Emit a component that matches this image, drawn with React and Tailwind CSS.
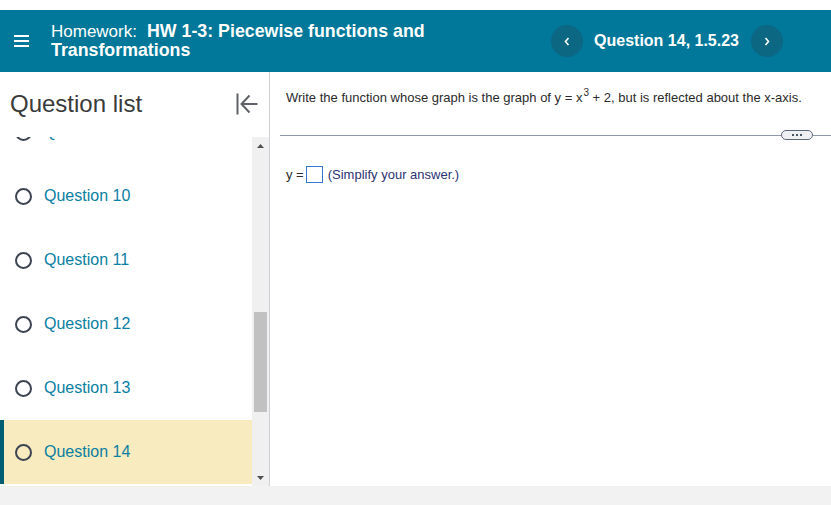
const questions = [
  { n: 9 },
  { n: 10 },
  { n: 11 },
  { n: 12 },
  { n: 13 },
  { n: 14, active: true },
];

const QuestionRow = ({ n, active }) => (
  <div
    className={
      active
        ? 'h-[64px] flex items-center pl-[11px] border-l-4 border-[#005d72] bg-[#f8ebbf]'
        : 'h-[64px] flex items-center pl-[15px]'
    }
  >
    <div className="w-[17px] h-[17px] rounded-full border-2 border-[#3c4452] shrink-0" />
    <span className="ml-[12px] text-[16px] text-[#0b7ea3]">Question {n}</span>
  </div>
);

const App = () => {
  return (
    <div
      className="w-[831px] h-[505px] bg-[#f2f2f2] flex flex-col overflow-hidden"
      style={{ fontFamily: '"Liberation Sans", Arial, sans-serif' }}
    >
      <div className="h-[10px] bg-white" />

      {/* header */}
      <div className="h-[62px] bg-[#017899] flex items-center text-white">
        <div className="ml-[14px] w-[15px] flex flex-col gap-[3px]">
          <div className="h-[2px] bg-white" />
          <div className="h-[2px] bg-white" />
          <div className="h-[2px] bg-white" />
        </div>
        <div className="ml-[22px] text-[17.8px] leading-[18px] -mt-[2px]">
          <div>
            <span className="text-[17px]">Homework:</span>
            <span className="ml-[10px] font-bold">HW 1-3: Piecewise functions and</span>
          </div>
          <div className="font-bold">Transformations</div>
        </div>
        <div className="ml-auto mr-[48px] flex items-center">
          <button className="w-[32px] h-[32px] rounded-full bg-[#0c6783] flex items-center justify-center text-white">
            <svg width="6" height="9" viewBox="0 0 6 9">
              <path d="M4.5 1 L1.5 4.5 L4.5 8" fill="none" stroke="white" strokeWidth="1.6" />
            </svg>
          </button>
          <span className="ml-[11px] mr-[12px] text-[16px] font-bold">Question 14, 1.5.23</span>
          <button className="w-[32px] h-[32px] rounded-full bg-[#0c6783] flex items-center justify-center text-white">
            <svg width="6" height="9" viewBox="0 0 6 9">
              <path d="M1.5 1 L4.5 4.5 L1.5 8" fill="none" stroke="white" strokeWidth="1.6" />
            </svg>
          </button>
        </div>
      </div>

      {/* body */}
      <div className="h-[414px] bg-white flex">
        {/* sidebar */}
        <div className="w-[270px] border-r border-[#cdd0d6] flex flex-col">
          <div className="h-[61px] flex items-center pl-[10px] pr-[11px] pt-[3px]">
            <span className="text-[24px] text-[#3a3a3a]">Question list</span>
            <svg className="ml-auto" width="22" height="22" viewBox="0 0 22 22">
              <path d="M1.5 0.5 V21.5" stroke="#5f6368" strokeWidth="2" fill="none" />
              <path d="M5.5 11 H21.5 M13.5 2.5 L5.5 11 L13.5 19.5" stroke="#5f6368" strokeWidth="2" fill="none" />
            </svg>
          </div>
          <div className="h-[353px] flex">
            <div className="w-[252px] mt-[4px] overflow-hidden">
              <div className="-mt-[37px]">
                {questions.map(q => (
                  <QuestionRow key={q.n} n={q.n} active={q.active} />
                ))}
              </div>
            </div>
            <div className="w-[17px] pt-[4px] flex flex-col">
              <div className="flex-1 bg-[#f0f0f0] flex flex-col">
                <div className="h-[17px] flex items-center justify-center">
                  <svg width="7" height="4" viewBox="0 0 7 4">
                    <path d="M0 4 L3.5 0 L7 4 Z" fill="#505050" />
                  </svg>
                </div>
                <div className="h-[158px]" />
                <div className="h-[100px] mx-[2px] bg-[#c1c1c1]" />
                <div className="flex-1" />
                <div className="h-[17px] flex items-center justify-center">
                  <svg width="7" height="4" viewBox="0 0 7 4">
                    <path d="M0 0 L3.5 4 L7 0 Z" fill="#505050" />
                  </svg>
                </div>
              </div>
            </div>
          </div>
        </div>

        {/* content */}
        <div className="flex-1 flex flex-col">
          <div className="pl-[16px] pt-[18px] text-[13px] leading-[15px] text-[#2b2b2b]">
            Write the function whose graph is the graph of y = x
            <span className="relative -top-[6px] text-[10px] leading-none ml-[1px]">3</span>
            {' '}+ 2, but is reflected about the x-axis.
          </div>
          <div className="mt-[25px] ml-[10px] h-[10px] flex items-center">
            <div className="flex-1 h-px bg-[#8e97a6]" />
            <div className="w-[32px] h-[10px] rounded-full border border-[#5d6878] bg-[#eef0f4] flex items-center justify-center gap-[2px]">
              <div className="w-[2px] h-[2px] bg-[#4a5563]" />
              <div className="w-[2px] h-[2px] bg-[#4a5563]" />
              <div className="w-[2px] h-[2px] bg-[#4a5563]" />
            </div>
            <div className="w-[18px] h-px bg-[#8e97a6]" />
          </div>
          <div className="mt-[26px] pl-[16px] flex items-center text-[13px] leading-[15px]">
            <span className="text-[#2b2b2b]">y =</span>
            <div className="ml-[2px] w-[17px] h-[17px] border-[1.5px] border-[#3577d4]" />
            <span className="ml-[5px] text-[#2c3273]">(Simplify your answer.)</span>
          </div>
        </div>
      </div>

      <div className="h-[19px] bg-[#f2f2f2]" />
    </div>
  );
};

export default App;
